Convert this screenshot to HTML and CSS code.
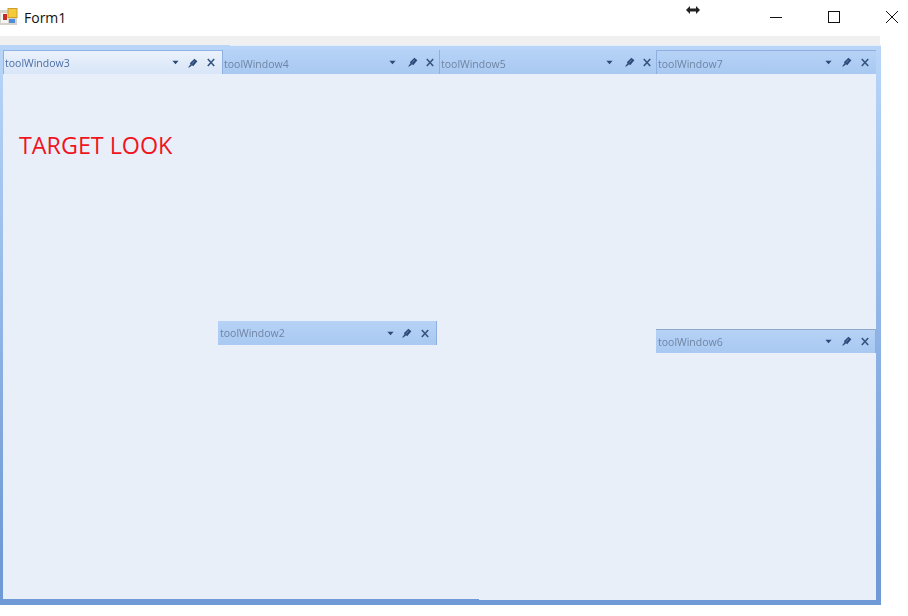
FILE: index.html
```html
<!DOCTYPE html>
<html lang="en">
<head>
<meta charset="utf-8">
<title>Form1</title>
<link rel="stylesheet" href="styles.css">
</head>
<body>
<svg class="defs" width="0" height="0" aria-hidden="true">
  <symbol id="caret" viewBox="0 0 8 5"><path d="M0.5 0.5h7L4 4.500z" fill="#2c4a78"/></symbol>
  <symbol id="pin" viewBox="0 0 10 10"><path d="M1.800 5.200L6.400 0.800 9.400 3.200 5.200 8.200zM0.300 9.200L2.600 6l1.400 1.400-3.200 2.300z" fill="#2c4a78"/><path d="M4.200 5.400L6.600 3" stroke="#7f9cc8" stroke-width="0.800" fill="none"/></symbol>
  <symbol id="close" viewBox="0 0 8 9"><path d="M0.800 1l6.400 7M7.200 1L0.800 8" stroke="#35557f" stroke-width="1.600" fill="none"/></symbol>
</svg>
<div class="titlebar">
  <svg class="appicon" viewBox="0 0 18 17" width="18" height="17">
    <rect x="0" y="2" width="17" height="15" fill="#d6d3cc"/>
    <rect x="1" y="5" width="7" height="10" fill="#f4f4f4"/>
    <rect x="3" y="6" width="4" height="6" fill="#c62a20"/>
    <rect x="8" y="0.500" width="9" height="9" fill="#f5c93c" stroke="#c9a030"/>
    <rect x="9" y="11" width="6" height="4" fill="#4f8ce0"/>
  </svg>
  <span class="title">Form1</span>
  <svg class="cursor" viewBox="0 0 14 8" width="14" height="8"><path d="M0 4l4-4v2.500h6V0l4 4-4 4V5.500H4V8z" fill="#222"/></svg>
  <div class="caption">
    <svg class="capbtn" viewBox="0 0 12 12" width="12" height="12"><path d="M0 6.500h12" stroke="#111" fill="none"/></svg>
    <svg class="capbtn" viewBox="0 0 12 12" width="12" height="12"><rect x="0.500" y="0.500" width="11" height="11" stroke="#111" fill="none"/></svg>
    <svg class="capbtn" viewBox="0 0 12 12" width="12" height="12"><path d="M0 0l12 12M12 0L0 12" stroke="#111" fill="none"/></svg>
  </div>
</div>
<div class="strip"></div>
<main class="frame">
  <div class="tabs">
    <div class="bar bar-active tab-wide"><span class="name">toolWindow3</span><svg class="i-caret"><use href="#caret"/></svg><svg class="i-pin"><use href="#pin"/></svg><svg class="i-close"><use href="#close"/></svg></div>
    <div class="bar tab"><span class="name">toolWindow4</span><svg class="i-caret"><use href="#caret"/></svg><svg class="i-pin"><use href="#pin"/></svg><svg class="i-close"><use href="#close"/></svg></div>
    <div class="bar tab"><span class="name">toolWindow5</span><svg class="i-caret"><use href="#caret"/></svg><svg class="i-pin"><use href="#pin"/></svg><svg class="i-close"><use href="#close"/></svg></div>
    <div class="bar tab-last"><span class="name">toolWindow7</span><svg class="i-caret"><use href="#caret"/></svg><svg class="i-pin"><use href="#pin"/></svg><svg class="i-close"><use href="#close"/></svg></div>
  </div>
  <div class="content">
    <h1 class="target">TARGET LOOK</h1>
    <div class="bar float float-2"><span class="name">toolWindow2</span><svg class="i-caret"><use href="#caret"/></svg><svg class="i-pin"><use href="#pin"/></svg><svg class="i-close"><use href="#close"/></svg></div>
    <div class="bar float float-6"><span class="name">toolWindow6</span><svg class="i-caret"><use href="#caret"/></svg><svg class="i-pin"><use href="#pin"/></svg><svg class="i-close"><use href="#close"/></svg></div>
    <div class="edge-left"></div>
  </div>
</main>
</body>
</html>
```
FILE: styles.css
```css
* { box-sizing: border-box; }
html, body { margin: 0; height: 100%; background: #fff; overflow: hidden; }
body { font-family: "Open Sans", "Liberation Sans", sans-serif; }
.defs { position: absolute; }

.titlebar { height: 36px; display: flex; align-items: flex-start; position: relative; }
.appicon { margin: 8px 0 0 0; flex: none; }
.title { margin: 9px 0 0 6px; font-size: 14px; line-height: 17px; color: #111; }
.cursor { position: absolute; left: 686px; top: 6px; }
.caption { position: absolute; left: 770px; top: 11px; display: flex; gap: 46px; }
.capbtn { flex: none; }

.strip { width: 880px; height: 9px; background: #f0f0f0; }
.frame {
  width: 881px; height: 560px;
  padding: 5px 5px 5px 3px;
  background: linear-gradient(#b9d6f9, #6f9ad6 90%);
  display: flex; flex-direction: column;
  position: relative;
}
.frame::before {
  content: ""; position: absolute; left: 230px; right: 0; top: 0; height: 1px; background: #e4effc;
}
.tabs { display: flex; height: 25px; background: #e8eff9; flex: none; }
.content { flex: 1; background: #e8eff9; position: relative; }
.edge-left {
  position: absolute; left: -3px; bottom: 0; width: 479px; height: 1px; background: #6f9ad6;
}

.bar {
  display: flex; align-items: center;
  height: 24px; padding: 0 0 0 2px;
  background: linear-gradient(#b6d2f6, #a9c9f2);
  border-right: 1px solid #8fb0de;
  color: #6f84a2; font-size: 10.5px;
}
.bar-active {
  background: linear-gradient(#eaf1fb, #d8e6f8);
  border-top: 1px solid #8fb4e6;
  border-left: 1px solid #8fb4e6;
  color: #4a6da6;
  padding-left: 1px;
}
.tab-wide { width: 220px; padding-right: 1px; }
.tab { width: 217px; padding-left: 1px; }
.tab-last { width: 219px; border-right: 0; padding-left: 1px; box-shadow: inset 0 1px #8fb0de; }
.float-6 { box-shadow: inset 0 1px #8fa9cc; }
.name { flex: 1; white-space: nowrap; filter: blur(0.3px); }
.tab .name, .tab-last .name { margin-top: 4px; }
.float-2 .name { margin-top: -1px; }
.float-6 .name { margin-top: 2px; }

.i-caret { width: 7px; height: 5px; margin-right: 9px; flex: none; }
.i-pin { width: 10px; height: 10px; margin-right: 9px; flex: none; }
.i-close { width: 8px; height: 9px; margin-right: 6px; flex: none; }
.tab .i-caret { margin-right: 12px; }
.tab .i-pin { margin-right: 8px; }
.tab .i-close { margin-right: 5px; }
.tab-last .i-caret, .float-6 .i-caret { margin-right: 10px; }
.tab-last .i-close { margin-right: 7px; }
.float-6 .i-close { margin-right: 6px; }
.float-2 .i-caret { margin-right: 8px; }
.float-2 .i-close { margin-right: 7px; }

.target {
  margin: 0; position: absolute; left: 16px; top: 55px;
  font-size: 23.3px; line-height: 30px; font-weight: 400; color: #f0141e;
}
.float { position: absolute; width: 219px; }
.float-2 { left: 215px; top: 246px; }
.float-6 { left: 653px; top: 254px; width: 220px; }
```
